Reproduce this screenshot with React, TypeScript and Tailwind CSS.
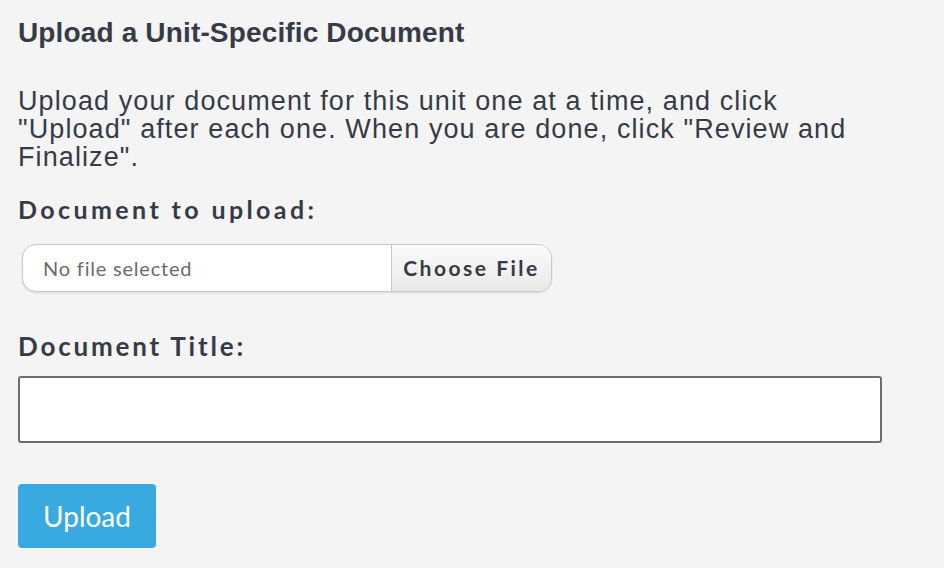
const sans = "font-['Liberation_Sans',Arial,sans-serif]";
const lato = "font-['Lato','Open_Sans',sans-serif]";

export default function App() {
  return (
    <div className="min-h-[568px] w-[944px] bg-[#f4f4f4] text-[#363b48]">
      <div className="w-[882px] pl-[18px]">
        <h2 className={`${sans} pt-[17px] text-[28px] leading-[32px] font-bold tracking-[0.15px]`}>
          Upload a Unit-Specific Document
        </h2>
        <p className={`${sans} mt-[38px] text-[27px] leading-[28px] tracking-[1.1px]`}>
          Upload your document for this unit one at a time, and click "Upload" after each one. When you are done, click
          "Review and Finalize".
        </p>

        <label className={`${lato} mt-[23px] block text-[25px] leading-[30px] font-bold tracking-[3.4px]`}>
          Document to upload:
        </label>
        <div className="mt-[20px] ml-[4px] flex h-[48px] w-[530px] overflow-hidden rounded-[14px] border border-[#c9c9c9] bg-white shadow-[0_1px_2px_rgba(0,0,0,0.12)]">
          <div className={`${lato} flex flex-1 items-center pl-[20px] text-[20px] tracking-[0.8px] text-[#6b6b6b]`}>
            No file selected
          </div>
          <button
            className={`${lato} flex w-[160px] items-center justify-center border-l border-[#c6c6c6] bg-gradient-to-b from-[#fbfbfb] to-[#e9e9e9] text-[21px] font-bold tracking-[2.5px] text-[#363b48]`}
          >
            Choose File
          </button>
        </div>

        <label className={`${lato} mt-[39px] block text-[26px] leading-[30px] font-bold tracking-[2.8px]`}>
          Document Title:
        </label>
        <input
          type="text"
          className="mt-[15px] block h-[67px] w-[864px] rounded-[3px] border-2 border-[#6e6e6e] bg-white"
        />

        <button
          className={`${lato} mt-[41px] h-[64px] w-[138px] rounded-[4px] bg-[#38aae0] text-[28px] text-white`}
        >
          Upload
        </button>
      </div>
    </div>
  );
}
